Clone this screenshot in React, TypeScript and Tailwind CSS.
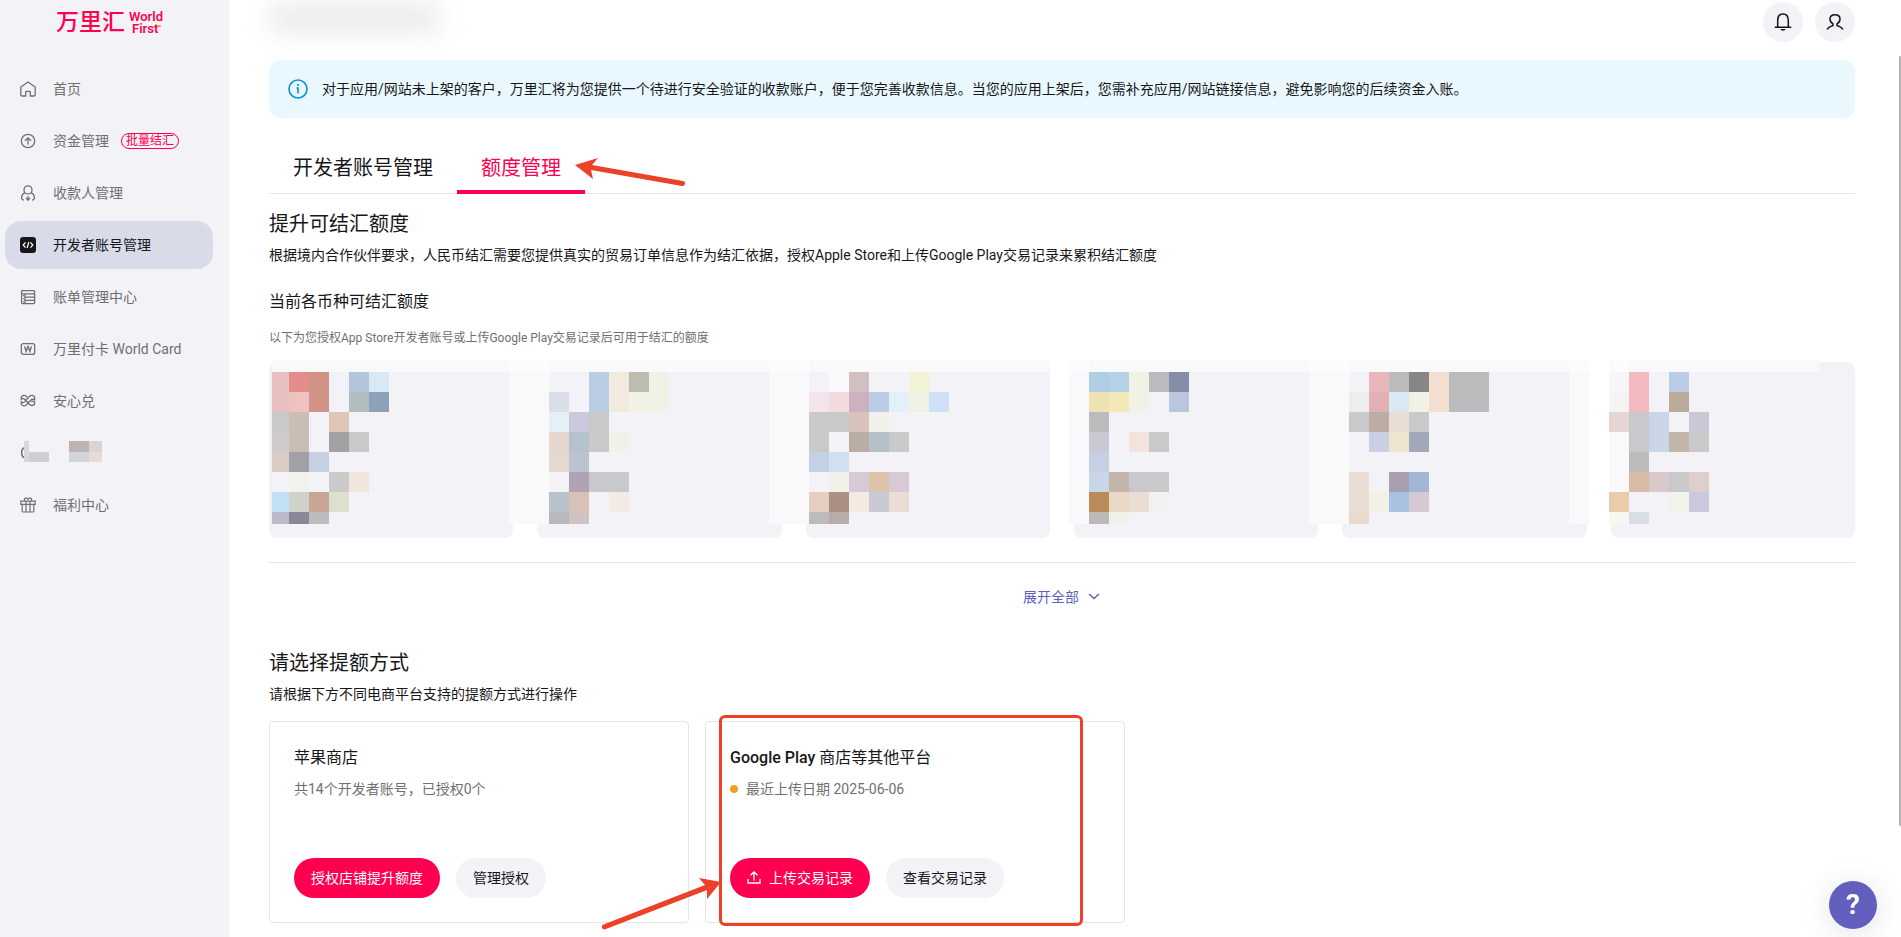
import type { ReactNode } from "react";

// Soft grid of 20px blocks that hides the amounts, "-" leaves a cell open
const mosaics = [
  {
    start: 0,
    rows: [
      "e9c0c1 e38c89 d19387 - b4c4dd d8e9f5",
      "e9c0c1 efc2c1 d19387 - b3bcbf 8da2b8",
      "c9c9cb cabdb4 - dec5b5",
      "d0cacc cabdb4 - a1a1a3 c9c9cb",
      "d9ccc4 a1a0a7 c6d0e5",
      "- f1f1ef - cacacc f2e5dc",
      "c0e0f6 d0d1c9 c8a696 dddfcf",
      "bbbac9 8c8798 bdbbbd",
    ],
  },
  {
    start: 14,
    rows: [
      "- - bbcde5 f2e9df bcbcb0 f1f2e5",
      "dadee8 - bbcde5 f2e9df f1f2e5 f1f2e5",
      "e3f1f7 cac8da c9c9cb",
      "e5d6ce b4c2cb c9c9cb f1f1ea",
      "e5d8d0 bcc2d0",
      "- b0a2b2 c9c9cb c9c9cb",
      "b9c1cc d8c2b7 - f2eae5",
      "b9b9bb d0c2c0",
    ],
  },
  {
    start: 27,
    rows: [
      "- f9f9fb d1bfc2 - - f2f2d7",
      "f2e4eb f2dadf cfb0c0 bbcde6 e1f1f7 f0f1e5 cee0f6",
      "c9c9cb c9c9cb d8c2ba f1f1ea",
      "c9c9cb - bbada3 b4c2c8 c9c9cb",
      "c6d0e5 cfe0f0",
      "- f1f1ea d7c9d5 ddc3a9 d7c9d5",
      "e3cebf aa9084 f2eae3 c9c9d5 eaddd4",
      "bbbbbd b9aba8",
    ],
  },
  {
    start: 41,
    rows: [
      "b0cee3 b5d1e7 f1f2e5 bbbbbd 868da8",
      "eee1b2 f4e8b9 f1f2e5 - bac5de",
      "bbbbbd",
      "c9c9d5 - f2e4dc c9c9cb",
      "c6d0e5",
      "c9d6e8 c3b5a9 c9c9cb c9c9cb",
      "b98b59 e9d8c6 eaddd4 f1f1ef",
      "bdb9b7 f1f1ea",
    ],
  },
  {
    start: 54,
    rows: [
      "- e8b6bb bbbbbd 868688 f2dfd1 bbbbbd bbbbbd",
      "ededed e2b0b3 d8e9f5 f1f2e5 f2dfd1 bbbbbd bbbbbd",
      "c9c9cb bbada3 eaddd5 c9c9cb",
      "- c9d0e3 efe4cf a1a7b9",
      "-",
      "eaddd5 - a8a0b0 a1b5d6",
      "eaddd5 f1f2e5 a7c2e1 d7c9d3",
      "ead9cd",
    ],
  },
  {
    start: 67,
    rows: [
      "f6f6f8 f3bac0 - bbcde6",
      "f4f4f5 f3bac0 - bbab9c",
      "e5d6d3 c9c9cb c9d6e8 - c9c9d5",
      "f9f9fb c9c9cb c9d6e8 c3b5a9 c9c9cb",
      "f9f9fb bbbbbd",
      "f9f9fb d8bca5 d8c9cd c9c9cb decfcd",
      "e9ccaa - - f1f2ea cac9dd",
      "f6f7ee d8dee6",
    ],
  },
];

// [x, width] of the pale columns between the cards
const hazeColumns = [
  [240, 40],
  [500, 40],
  [800, 20],
  [1040, 40],
  [1300, 20],
];

function Mosaic() {
  return (
    <svg className="absolute -top-0.5 left-[3px]" width="1550" height="164" shapeRendering="crispEdges" aria-hidden="true">
      <g transform="translate(-3 12)">
        <path d="M0-12H780V0H0zM800-12H1320V0H800zM1340-12H1550V0H1340z" fill="#f9f9fb" />
        {hazeColumns.map(([x, w]) => (
          <g key={x}>
            <rect x={x} y={-12} width={w} height={12} fill="#fcfcfe" />
            <rect x={x} y={0} width={w} height={152} fill="#f9f9fb" />
          </g>
        ))}
        <rect x="1340" y="-12" width="20" height="12" fill="#fcfcfe" />
        {mosaics.map(({ start, rows }) =>
          rows.map((row, y) =>
            row.split(" ").map((c, x) =>
              c === "-" ? null : (
                <rect key={`${start}-${x}-${y}`} x={(start + x) * 20} y={y * 20} width="20" height="20" fill={`#${c}`} />
              )
            )
          )
        )}
      </g>
    </svg>
  );
}

function Icon({ children }: { children: ReactNode }) {
  return (
    <svg className="size-4 shrink-0" viewBox="0 0 16 16" fill="none" stroke="currentColor" strokeWidth="1.3" aria-hidden="true">
      {children}
    </svg>
  );
}

const navItems = [
  {
    label: "首页",
    icon: (
      <Icon>
        <path d="M5.7 15H2a1.2 1.2 0 0 1-1.2-1.2V6L8 1l7.2 5v7.8A1.2 1.2 0 0 1 14 15h-3.7v-3.8a.8.8 0 0 0-.8-.8h-3a.8.8 0 0 0-.8.8z" />
      </Icon>
    ),
  },
  {
    label: "资金管理",
    badge: "批量结汇",
    icon: (
      <Icon>
        <circle cx="8" cy="8" r="6.7" />
        <path d="M8 11.5V5M4.9 7.8 8 4.8l3.1 3" />
      </Icon>
    ),
  },
  {
    label: "收款人管理",
    icon: (
      <Icon>
        <circle cx="8" cy="4.9" r="4" />
        <path d="M5 7.7C2.8 8.8 1.6 10.4 1.6 12.5c0 1.5.7 2.5 2.2 2.5M11 7.7c2.2 1.1 3.4 2.7 3.4 4.8 0 1.5-.7 2.5-2.2 2.5M8 11v4M6 13l2 2.2 2-2.2" />
      </Icon>
    ),
  },
  {
    label: "开发者账号管理",
    active: true,
    icon: (
      <Icon>
        <rect width="16" height="16" rx="3" fill="#17171a" stroke="none" />
        <path d="M5.5 5.3 3.2 8l2.3 2.7M10.5 5.3 12.8 8l-2.3 2.7M8.9 5 7.1 11" stroke="#fff" strokeWidth="1.2" />
      </Icon>
    ),
  },
  {
    label: "账单管理中心",
    icon: (
      <Icon>
        <rect x="1.6" y="1.6" width="13" height="13" rx=".8" />
        <path d="M1.6 4.9h13M4.9 4.9v9.7M4.9 8.1h9.7M4.9 11.3h9.7M3 6.6h.9M3 9.7h.9M3 12.9h.9" />
      </Icon>
    ),
  },
  {
    label: "万里付卡 World Card",
    icon: (
      <Icon>
        <rect x="1.3" y="2.6" width="13.4" height="10.8" rx="2" />
        <path d="m4.6 5.4 1.5 5 1.9-5 1.9 5 1.5-5" strokeWidth="1.4" />
      </Icon>
    ),
  },
  {
    label: "安心兑",
    icon: (
      <Icon>
        <path d="M7.4 4.4 6.2 3.2C4.700 1.800 2.800 2 1.300 3.900v2.200c1.400-.9 2.700-.6 3.900.6l4.200 4.500c1.600 1.700 3.700 1.700 5.200 0V9c-1.100-1-2.300-1-3.200-.1" />
        <path d="M4.500 8.900c-1 1-2.200.9-3.200-.1v2.500c1.600 2 3.500 2.100 5.200.4l4.200-4.500c1.200-1.200 2.600-1.200 3.900-.4V3.900c-1.600-1.900-3.500-2-5-.6L4.500 8.900" />
      </Icon>
    ),
  },
  { label: "", icon: null },
  {
    label: "福利中心",
    icon: (
      <Icon>
        <path d="M.8 4.2h14.4v3.2H.8zM2.2 7.4V14a1 1 0 0 0 1 1h9.6a1 1 0 0 0 1-1V7.4M6 4.2V15M10 4.2V15M4.4 4V2.2a1 1 0 0 1 1-1h1.4L8 2.4l1.2-1.2h1.4a1 1 0 0 1 1 1V4" strokeWidth="1.2" />
      </Icon>
    ),
  },
];

function HiddenItem() {
  return (
    <svg width="82" height="24" viewBox="0 0 82 24" shapeRendering="crispEdges" aria-hidden="true">
      <path d="M5 6.5C.5 7.500.5 16 5 17M5 9.500v4.500" fill="none" stroke="#707073" strokeWidth="1.5" shapeRendering="auto" />
      <path d="M4 0h5v21H4z" fill="#d8d8dc" />
      <path d="M9 11h20v10H9z" fill="#cfced4" />
      <path d="M49 0h20v11H49z" fill="#bfb3b1" />
      <path d="M69 0h13v11H69z" fill="#d9d5d4" />
      <path d="M49 11h20v10H49z" fill="#d4d3d8" />
      <path d="M69 11h13v10H69z" fill="#e7dbd5" />
    </svg>
  );
}

function Sidebar() {
  return (
    <aside className="w-[229px] shrink-0 bg-[#f2f2f7]">
      <a href="#" className="flex h-[65px] items-start gap-1 pt-[7px] pl-14 text-[#ff0051]">
        <span className="text-[23px] leading-8 font-medium">万里汇</span>
        <span className="flex flex-col pt-1 text-[13px] leading-3 font-semibold">
          <span>World</span>
          <span className="relative pl-[3px]">
            First
            <span className="absolute top-0.5 left-7 h-0.5 w-1 rounded-full bg-[#ff9a3c]"></span>
          </span>
        </span>
      </a>
      <nav className="flex flex-col gap-1 pr-4 pl-[5px]">
        {navItems.map((item, i) => (
          <a
            key={i}
            href="#"
            aria-label={item.label || undefined}
            className={`flex h-12 items-center rounded-2xl pl-[15px] text-sm ${
              item.active ? "bg-[#d9dbe9] text-[#17171a]" : "text-[#707073]"
            }`}
          >
            {item.icon ?? <HiddenItem />}
            {item.label && <span className="ml-[17px]">{item.label}</span>}
            {item.badge && (
              <span className="ml-3 flex h-4 items-center rounded-full border border-[#ff0051] px-1 text-xs text-[#ff0051]">
                {item.badge}
              </span>
            )}
          </a>
        ))}
      </nav>
    </aside>
  );
}

function Header() {
  return (
    <header className="flex h-15 items-start justify-between pt-0.5">
      <div className="h-8 w-[170px] bg-[#ececee] blur-[12px]"></div>
      <div className="flex gap-3">
        <button aria-label="通知" className="flex size-10 items-center justify-center rounded-full bg-[#f2f2f7] text-[#17171a]">
          <svg className="size-5" viewBox="0 0 20 20" fill="none" stroke="currentColor" strokeWidth="1.5">
            <path d="M4.7 15V8.5C4.7 4.5 6.8 2 10 2s5.3 2.5 5.3 6.5V15M1.8 15.3h16.4" />
            <path d="M7.3 17h5.4c-.6 1.2-1.5 1.7-2.7 1.7S7.9 18.2 7.3 17z" fill="currentColor" stroke="none" />
          </svg>
        </button>
        <button aria-label="账户" className="flex size-10 items-center justify-center rounded-full bg-[#f2f2f7] text-[#17171a]">
          <svg className="size-5" viewBox="0 0 20 20" fill="none" stroke="currentColor" strokeWidth="1.5">
            <path d="M2.2 17.5c.9-2 2.7-3 5.8-4v-1.6C5.9 10.8 5 9 5 7c0-2.6 2-4.3 5-4.3S15 4.4 15 7c0 2-.9 3.8-3 4.9v1.6c3.1 1 4.9 2 5.8 4" />
          </svg>
        </button>
      </div>
    </header>
  );
}

function Tabs() {
  return (
    <div role="tablist" className="mt-6 flex h-13 border-b border-[#e5e5e8] text-xl">
      <button role="tab" className="h-13 px-6">开发者账号管理</button>
      <div className="relative">
        <button role="tab" aria-selected="true" className="h-13 border-y-4 border-t-transparent border-b-[#ff0051] px-6 text-[#ff0051]">
          额度管理
        </button>
        <svg className="pointer-events-none absolute top-3.5 left-[118px]" width="112" height="34" fill="#ec4027" aria-hidden="true">
          <path d="M0 9 23 2 17 9l91 16a2.5 2.5 0 0 1-1 5L16 14l2 9z" />
        </svg>
      </div>
    </div>
  );
}

const primaryButton = "flex h-10 items-center rounded-full bg-[#ff0051] px-[17px] text-sm text-white";
const plainButton = "flex h-10 items-center rounded-full bg-[#f2f2f7] px-[17px] text-sm text-[#17171a]";

export default function App() {
  return (
    <div className="flex min-h-screen bg-white font-['Roboto','Noto_Sans_CJK_SC',sans-serif] text-[#17171a]">
      <Sidebar />

      <main className="min-w-0 flex-1 pr-[46px] pl-10">
        <Header />

        <div className="flex items-center gap-3.5 rounded-xl bg-[#e9f7ff] px-[19px] py-[18px]">
          <svg className="size-5 shrink-0" viewBox="0 0 20 20" fill="none" stroke="#0b8fdb" strokeWidth="1.6" aria-hidden="true">
            <circle cx="10" cy="10" r="9" />
            <path d="M8.5 9H10v5.5" />
            <circle cx="10" cy="6" r="1.1" fill="#0b8fdb" stroke="none" />
          </svg>
          <p className="text-sm leading-[22px]">
            对于应用/网站未上架的客户，万里汇将为您提供一个待进行安全验证的收款账户，便于您完善收款信息。当您的应用上架后，您需补充应用/网站链接信息，避免影响您的后续资金入账。
          </p>
        </div>

        <Tabs />

        <section>
          <h2 className="mt-4 text-xl leading-7">提升可结汇额度</h2>
          <p className="mt-1.5 text-sm leading-[22px]">
            根据境内合作伙伴要求，人民币结汇需要您提供真实的贸易订单信息作为结汇依据，授权Apple Store和上传Google Play交易记录来累积结汇额度
          </p>
          <h3 className="mt-6 text-base leading-6">当前各币种可结汇额度</h3>
          <p className="mt-3.5 text-xs leading-5 text-[#707073]">
            以下为您授权App Store开发者账号或上传Google Play交易记录后可用于结汇的额度
          </p>

          <div className="relative mt-3.5">
            <div className="grid grid-cols-6 gap-6">
              {mosaics.map(({ start }) => (
                <div key={start} className="h-44 rounded-lg bg-[#f2f2f7]"></div>
              ))}
            </div>
            <Mosaic />
          </div>

          <div className="mt-6 flex justify-center border-t border-[#e5e5e8] pt-6">
            <button className="flex items-center gap-2 text-sm leading-5 text-[#625fbf]">
              展开全部
              <svg className="size-3.5" viewBox="0 0 14 14" fill="none" stroke="currentColor" strokeWidth="1.5" aria-hidden="true">
                <path d="m2 4 5 4.5L12 4" />
              </svg>
            </button>
          </div>
        </section>

        <section>
          <h2 className="mt-10.5 text-xl leading-7">请选择提额方式</h2>
          <p className="mt-1.5 text-sm leading-[22px]">请根据下方不同电商平台支持的提额方式进行操作</p>

          <div className="mt-4 flex gap-4">
            <div className="w-[420px] rounded border border-[#e5e5e8] p-6">
              <h3 className="text-base leading-6">苹果商店</h3>
              <p className="mt-2 text-sm leading-[22px] text-[#707073]">共14个开发者账号，已授权0个</p>
              <div className="mt-14.5 flex gap-4">
                <button className={primaryButton}>授权店铺提升额度</button>
                <button className={plainButton}>管理授权</button>
              </div>
            </div>

            <div className="relative w-[420px] rounded border border-[#e5e5e8] p-6">
              <h3 className="text-base leading-6">
                <span className="font-medium">Google Play</span> 商店等其他平台
              </h3>
              <p className="mt-2 flex items-center gap-2 text-sm leading-[22px] text-[#707073]">
                <span className="size-2 rounded-full bg-[#f0a01e]"></span>
                最近上传日期 2025-06-06
              </p>
              <div className="mt-14.5 flex gap-4">
                <button className={primaryButton}>
                  <svg className="mr-2 size-3.5" viewBox="0 0 14 14" fill="none" stroke="currentColor" strokeWidth="1.3" aria-hidden="true">
                    <path d="M7 9.5V1M3.5 4.3 7 1l3.500 3.300M1 8v4h12V8" />
                  </svg>
                  上传交易记录
                </button>
                <button className={plainButton}>查看交易记录</button>
              </div>

              {/* Highlight frame and its arrow */}
              <div className="pointer-events-none absolute -top-[7px] left-[13px] h-[211px] w-[364px] rounded-md border-3 border-[#ec4027]"></div>
              <svg className="pointer-events-none absolute top-[153px] -left-[106px]" width="124" height="58" fill="#ec4027" aria-hidden="true">
                <path d="M121 7 99 3l6 7L3.5 49.5a2.5 2.5 0 0 0 1.8 4.8L107 15v9z" />
              </svg>
            </div>
          </div>
        </section>
      </main>

      <button
        aria-label="帮助"
        className="fixed right-6 bottom-2 flex size-12 items-center justify-center rounded-full bg-[#625fbf] text-[28px] font-bold text-white shadow-[0_4px_32px_rgba(0,0,0,0.12)]"
      >
        ?
      </button>
      <div className="fixed top-14 right-0 h-[770px] w-0.5 rounded-full bg-[#b4b4b4]"></div>
    </div>
  );
}
